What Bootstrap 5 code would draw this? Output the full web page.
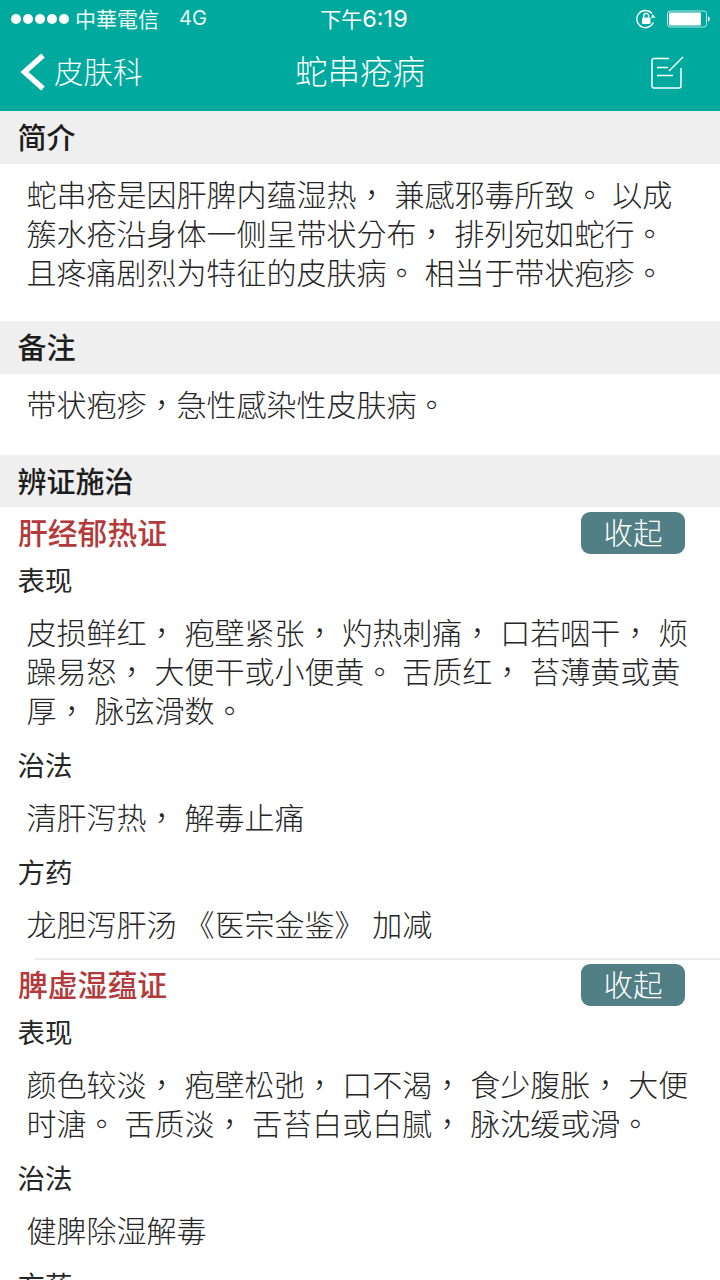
<!DOCTYPE html>
<html lang="zh-CN">
<head>
<meta charset="utf-8">
<title>蛇串疮病</title>
<link href="https://cdn.jsdelivr.net/npm/bootstrap@5.3.0/dist/css/bootstrap.min.css" rel="stylesheet">
<style>
html,body{margin:0;background:#fff;}
body{font-family:"Noto Sans CJK SC","Liberation Sans",sans-serif;color:#262626;}
.screen{width:720px;height:1280px;overflow:hidden;}
.topbar{height:111px;background:#00a99d;color:#fff;}
.statusline{height:37px;padding:0 10px;font-size:21px;line-height:37px;}
.carrier{font-family:"Noto Sans CJK TC",sans-serif;margin-left:5px;opacity:.92;}
.net{font-family:Inter,"Liberation Sans",sans-serif;font-size:20px;margin-left:20px;opacity:.92;}
.clock{font-size:21px;margin-left:8px;}
.clock-num{font-family:Inter,"Liberation Sans",sans-serif;font-size:23.5px;}
.side{flex:1 1 0;}
.navline{height:74px;padding:0 20px 4px;}
.navtext{margin-bottom:4px;}
.backtxt{font-size:29.500px;font-weight:300;margin-left:8px;}
.navtitle{font-size:32.500px;font-weight:300;}
.editicon{margin-right:16px;}
.sechead{background:#efefef;height:53px;line-height:51px;padding-left:17.500px;font-size:29px;font-weight:500;color:#1d1d1d;}
.sechead.short{height:52px;line-height:50px;}
.para,.sub{font-family:"Noto Sans CJK TC","Noto Sans CJK SC",sans-serif;font-size:30px;line-height:39px;font-weight:300;color:#262626;margin:0;word-spacing:1.300px;}
.para{padding:10px 18px 0 26.500px;}
.para.pb-a{padding-bottom:30px;}
.para.pb-b{padding-bottom:32px;}
.grouphead{height:52px;padding:5px 35px 5px 18px;}
.grouphead.next{padding:4px 35px 5px 18px;height:51px;}
.redtitle{font-size:29.800px;font-weight:500;color:#b3393a;line-height:38px;height:42px;}
.foldbtn{width:104px;height:42px;background:#527f85;color:#fff;border:0;border-radius:9px;font-size:29.500px;font-weight:300;line-height:36px;padding:0 0 4px;}
.label{font-size:27.500px;line-height:40px;height:40px;padding-left:17.500px;font-weight:400;color:#262626;}
.sub{padding:13px 18px 15px 26.500px;}
.divide{height:2px;margin-left:35px;background:#ececec;}
</style>
</head>
<body>
<div class="screen">
  <header class="topbar">
    <div class="statusline d-flex align-items-center">
      <div class="side d-flex align-items-center">
        <svg width="60" height="12" viewBox="0 0 60 12" fill="#fff"><circle cx="6" cy="6" r="5"/><circle cx="18" cy="6" r="5"/><circle cx="30" cy="6" r="5"/><circle cx="42" cy="6" r="5"/><circle cx="54" cy="6" r="5"/></svg>
        <span class="carrier">中華電信</span><span class="net">4G</span>
      </div>
      <div class="clock">下午<span class="clock-num">6:19</span></div>
      <div class="side d-flex align-items-center justify-content-end">
        <svg width="76" height="20" viewBox="0 0 76 20" fill="none">
          <path d="M18 4.500A8.600 8.600 0 1 0 19.300 13.500" stroke="#fff" stroke-width="1.400"/>
          <path d="M18.500 5 21.500 8.500 17 9z" fill="#fff"/>
          <rect x="8" y="8.500" width="8.500" height="6.500" rx="1" fill="#fff"/>
          <path d="M9.800 8.500V6.800a2.400 2.400 0 0 1 4.800 0v1.700" stroke="#fff" stroke-width="1.400"/>
          <rect x="33.500" y="2" width="39" height="16" rx="2.500" stroke="#fff" stroke-opacity=".7"/>
          <rect x="35" y="3.500" width="32" height="13" rx="1" fill="#fff"/>
          <path d="M74 7.500c1.300 .3 1.700 1.200 1.700 2.500s-.4 2.200-1.700 2.500z" fill="#fff"/>
        </svg>
      </div>
    </div>
    <div class="navline d-flex align-items-center">
      <div class="side d-flex align-items-center">
        <svg width="26" height="38" viewBox="0 0 26 38" fill="none"><path d="M23 2.500 4.500 19 23 35.500" stroke="#fff" stroke-width="5.500"/></svg>
        <span class="backtxt navtext">皮肤科</span>
      </div>
      <div class="navtitle navtext">蛇串疮病</div>
      <div class="side d-flex justify-content-end">
        <svg class="editicon" width="33" height="33" viewBox="0 0 33 33" fill="none" stroke="#fff" stroke-width="1.500">
          <path d="M18 2.500H3a2 2 0 0 0-2 2V30a2 2 0 0 0 2 2h25a2 2 0 0 0 2-2V12"/>
          <path d="M18 15 32 1"/>
          <path d="M6 11.500h11M6 19.500h16"/>
        </svg>
      </div>
    </div>
  </header>

  <main>
    <div class="sechead">简介</div>
    <p class="para pb-a" lang="zh-TW">蛇串疮是因肝脾内蕴湿热， 兼感邪毒所致。 以成簇水疮沿身体一侧呈带状分布， 排列宛如蛇行。 且疼痛剧烈为特征的皮肤病。 相当于带状疱疹。</p>
    <div class="sechead">备注</div>
    <p class="para pb-b" lang="zh-TW">带状疱疹，急性感染性皮肤病。</p>
    <div class="sechead short">辨证施治</div>

    <div class="grouphead d-flex justify-content-between align-items-center">
      <div class="redtitle">肝经郁热证</div>
      <button type="button" class="btn foldbtn">收起</button>
    </div>
    <div class="label">表现</div>
    <p class="sub" lang="zh-TW">皮损鲜红， 疱壁紧张， 灼热刺痛， 口若咽干， 烦躁易怒， 大便干或小便黄。 舌质红， 苔薄黄或黄厚， 脉弦滑数。</p>
    <div class="label">治法</div>
    <p class="sub" lang="zh-TW">清肝泻热， 解毒止痛</p>
    <div class="label">方药</div>
    <p class="sub" lang="zh-TW">龙胆泻肝汤 《医宗金鉴》 加减</p>
    <div class="divide"></div>

    <div class="grouphead next d-flex justify-content-between align-items-center">
      <div class="redtitle">脾虚湿蕴证</div>
      <button type="button" class="btn foldbtn">收起</button>
    </div>
    <div class="label">表现</div>
    <p class="sub" lang="zh-TW">颜色较淡， 疱壁松弛， 口不渴， 食少腹胀， 大便时溏。 舌质淡， 舌苔白或白腻， 脉沈缓或滑。</p>
    <div class="label">治法</div>
    <p class="sub" lang="zh-TW">健脾除湿解毒</p>
    <div class="label">方药</div>
  </main>
</div>
<script src="https://cdn.jsdelivr.net/npm/bootstrap@5.3.0/dist/js/bootstrap.bundle.min.js"></script>
</body>
</html>
